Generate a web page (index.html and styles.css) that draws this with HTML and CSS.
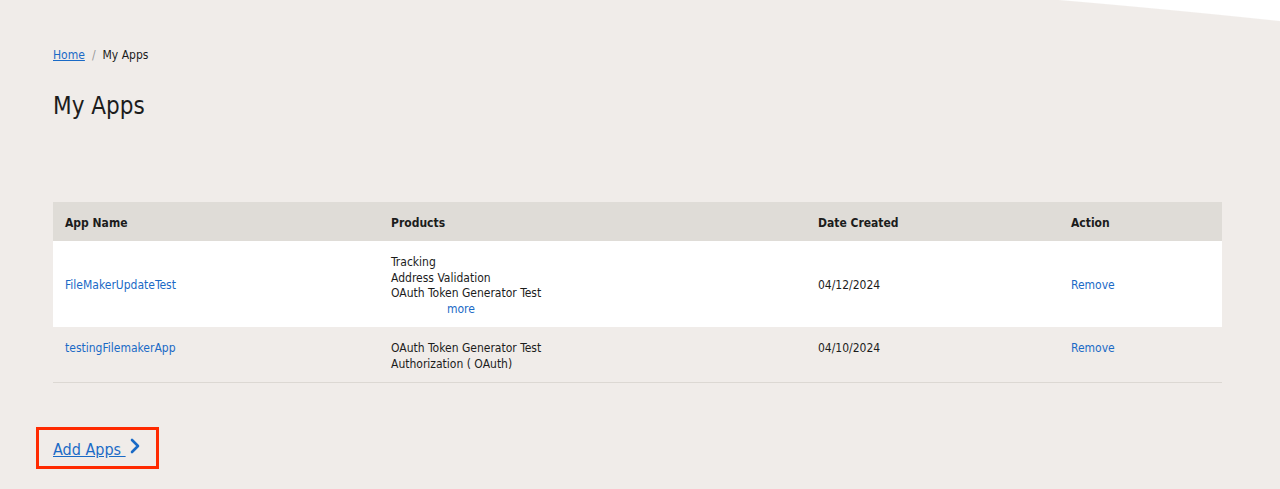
FILE: index.html
```html
<!DOCTYPE html>
<html>
<head>
<meta charset="utf-8">
<link rel="stylesheet" href="styles.css">
</head>
<body>
<div class="page">
  <nav class="crumbs"><a href="#">Home</a><span class="sep">/</span><span>My Apps</span></nav>
  <h1 class="title">My Apps</h1>
  <table class="apps">
    <thead>
      <tr><th class="c1">App Name</th><th class="c2">Products</th><th class="c3">Date Created</th><th class="c4">Action</th></tr>
    </thead>
    <tbody>
      <tr class="r1">
        <td><a href="#">FileMakerUpdateTest</a></td>
        <td><div>Tracking</div><div>Address Validation</div><div>OAuth Token Generator Test</div><div class="more"><a href="#">more</a></div></td>
        <td>04/12/2024</td>
        <td><a href="#">Remove</a></td>
      </tr>
      <tr class="r2">
        <td><a href="#">testingFilemakerApp</a></td>
        <td><div>OAuth Token Generator Test</div><div>Authorization ( OAuth)</div></td>
        <td>04/10/2024</td>
        <td><a href="#">Remove</a></td>
      </tr>
    </tbody>
  </table>
  <div class="add"><a href="#">Add Apps </a><svg class="chev" width="12" height="16" viewBox="0 0 12 16"><path d="M3 2 L9 8 L3 14" fill="none" stroke="#1a6ac6" stroke-width="2.6" stroke-linecap="round" stroke-linejoin="round"/></svg></div>
</div>
</body>
</html>
```
FILE: styles.css
```css
html, body { margin: 0; padding: 0; }
body {
  font-family: "DejaVu Sans Condensed", "DejaVu Sans", sans-serif;
  color: #1c1c1c;
  background-color: #f0ece9;
  background-image: radial-gradient(3000px 675px at 0 631px, #f0ece9 99.85%, #ffffff 100%);
  background-repeat: no-repeat;
  min-height: 489px;
}
a { color: #1a6ac6; text-decoration: none; }
.page { padding: 47px 58px 0 53px; }
.crumbs { font-size: 12px; line-height: 16px; }
.crumbs a { text-decoration: underline; }
.crumbs .sep { color: #999; margin: 0 7px; }
.title { font-size: 24px; font-weight: normal; line-height: 28px; margin: 29px 0 0; color: #1c1c1c; }
.apps { width: 100%; border-collapse: collapse; margin-top: 82px; font-size: 12px; line-height: 15.5px; }
.apps th { background: #dfdcd7; text-align: left; font-weight: bold; padding: 14px 12px 9.5px; }
.apps td { padding: 14px 12px 10px; vertical-align: middle; }
.c1 { width: 302px; }
.c2 { width: 403px; }
.c3 { width: 229px; }
.r1 td { background: #ffffff; }
.r2 td { background: #f0ece9; vertical-align: top; border-bottom: 1px solid #dcd8d3; }
.more { padding-left: 56px; }
.add { display: inline-flex; align-items: center; margin: 44px 0 0 -17px; padding: 8px 15px 8px 14px; border: 3px solid #ff2a00; font-size: 16px; line-height: 20px; }
.add a { text-decoration: underline; white-space: pre; position: relative; top: 2px; }
.chev { margin-left: 3px; margin-top: -4px; }
```
